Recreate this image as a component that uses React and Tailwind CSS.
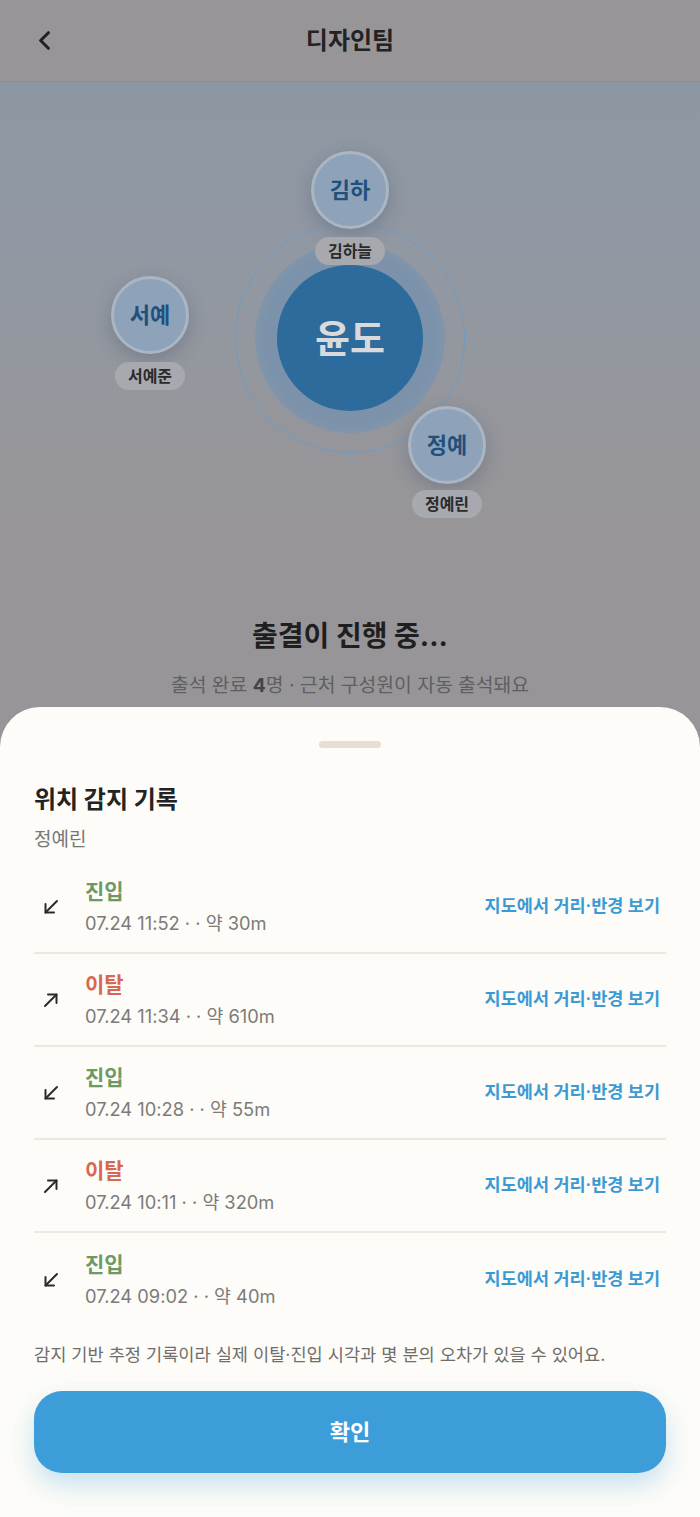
import { ChevronLeft } from "lucide-react";

const records = [
  { type: "in", time: "07.24 11:52", dist: "약 30m" },
  { type: "out", time: "07.24 11:34", dist: "약 610m" },
  { type: "in", time: "07.24 10:28", dist: "약 55m" },
  { type: "out", time: "07.24 10:11", dist: "약 320m" },
  { type: "in", time: "07.24 09:02", dist: "약 40m" },
];

const members = [
  { short: "김하", name: "김하늘", x: 350, y: 108, ly: 169 },
  { short: "서예", name: "서예준", x: 150, y: 233, ly: 294 },
  { short: "정예", name: "정예린", x: 447, y: 363, ly: 422 },
];

function Arrow({ dir }) {
  // 진입 = ↙, 이탈 = ↗
  return (
    <svg width="18" height="18" viewBox="0 0 18 18" fill="none" stroke="#2a2a2a" strokeWidth="2" strokeLinecap="round" strokeLinejoin="round">
      {dir === "in" ? (
        <>
          <path d="M15 3 3.5 14.5" />
          <path d="M3.5 6v8.5H12" />
        </>
      ) : (
        <>
          <path d="M3 15 14.5 3.5" />
          <path d="M6 3.5h8.5V12" />
        </>
      )}
    </svg>
  );
}

function Member({ m }) {
  return (
    <>
      <div
        className="absolute w-[78px] h-[78px] -ml-[39px] -mt-[39px] rounded-full bg-[#8ea3b9] border-[3px] border-[#aab6c3] shadow-[0_6px_18px_rgba(50,70,100,0.28)] flex items-center justify-center text-[22px] font-bold text-[#22507d]"
        style={{ left: m.x, top: m.y }}
      >
        {m.short}
      </div>
      <div
        className="absolute h-[28px] w-[70px] -ml-[35px] -mt-[14px] rounded-full bg-[#a7a9af] flex items-center justify-center text-[16px] font-semibold text-[#2a2a2c]"
        style={{ left: m.x, top: m.ly }}
      >
        {m.name}
      </div>
    </>
  );
}

export default function App() {
  return (
    <div
      className="w-[700px] h-[1517px] bg-[#979598] overflow-hidden flex flex-col"
      style={{ fontFamily: "Inter, 'Noto Sans CJK KR', sans-serif" }}
    >
      <header className="h-[82px] shrink-0 flex items-center relative border-b border-[#8e8c90]">
        <ChevronLeft className="absolute left-[29px] text-[#222]" size={31} strokeWidth={2.4} />
        <h1 className="w-full text-center text-[24px] font-bold text-[#222224]">디자인팀</h1>
      </header>

      <div className="relative h-[535px] shrink-0 bg-[linear-gradient(180deg,#8d97a3_0%,#9198a2_35%,#979598_80%)]">
        <div className="absolute left-[350px] top-[256px] w-[230px] h-[230px] -ml-[115px] -mt-[115px] rounded-full border border-[#6e9cc4]" />
        <div className="absolute left-[350px] top-[256px] w-[190px] h-[190px] -ml-[95px] -mt-[95px] rounded-full bg-[radial-gradient(circle,#7b92aa_62%,#8a9aac_85%,#95a0ac_100%)]" />
        <div className="absolute left-[350px] top-[256px] w-[146px] h-[146px] -ml-[73px] -mt-[73px] rounded-full bg-[#2c6b9c] flex items-center justify-center text-[38px] font-bold text-[#d9dadc]">
          윤도
        </div>
        {members.map((m) => (
          <Member key={m.name} m={m} />
        ))}
      </div>

      <div className="text-center">
        <h2 className="text-[28px] leading-[38px] font-bold text-[#1f1f21]">출결이 진행 중...</h2>
        <p className="mt-[16px] text-[19.3px] leading-[28px] text-[#5f5e62]">
          출석 완료 <span className="font-bold text-[#444346]">4</span>명 · 근처 구성원이 자동 출석돼요
        </p>
      </div>

      <section className="mt-[8px] flex-1 bg-[#fdfcf8] rounded-t-[40px] px-[34px] flex flex-col">
        <div className="mt-[34px] mx-auto w-[62px] h-[7px] rounded-full bg-[#e8dfd4]" />
        <h3 className="mt-[36px] text-[24px] leading-[32px] font-bold text-[#232323]">위치 감지 기록</h3>
        <p className="mt-[11px] text-[19px] leading-[26px] text-[#777]">정예린</p>

        <ul className="mt-[8px]">
          {records.map((r, i) => (
            <li
              key={i}
              className={`flex items-center h-[93px] ${i < records.length - 1 ? "border-b-2 border-[#ece9e4]" : ""}`}
            >
              <div className="w-[51px] pl-[8px]">
                <Arrow dir={r.type} />
              </div>
              <div className="flex-1">
                <div
                  className={`text-[21px] leading-[28px] font-bold ${r.type === "in" ? "text-[#6d9a62]" : "text-[#d8674f]"}`}
                >
                  {r.type === "in" ? "진입" : "이탈"}
                </div>
                <div className="mt-[4px] text-[18.3px] leading-[26px] text-[#7c7b79]">
                  {r.time} · · {r.dist}
                </div>
              </div>
              <span className="pr-[6px] text-[17.5px] font-semibold text-[#3b9ad4]">지도에서 거리·반경 보기</span>
            </li>
          ))}
        </ul>

        <p className="mt-[17px] text-[17.6px] leading-[24px] text-[#6f6e6c]">
          감지 기반 추정 기록이라 실제 이탈·진입 시각과 몇 분의 오차가 있을 수 있어요.
        </p>

        <button className="mt-[24px] h-[82px] w-full rounded-[28px] bg-[#3d9dd8] text-white text-[22px] font-bold shadow-[0_12px_26px_rgba(61,157,216,0.28)]">
          확인
        </button>
      </section>
    </div>
  );
}
